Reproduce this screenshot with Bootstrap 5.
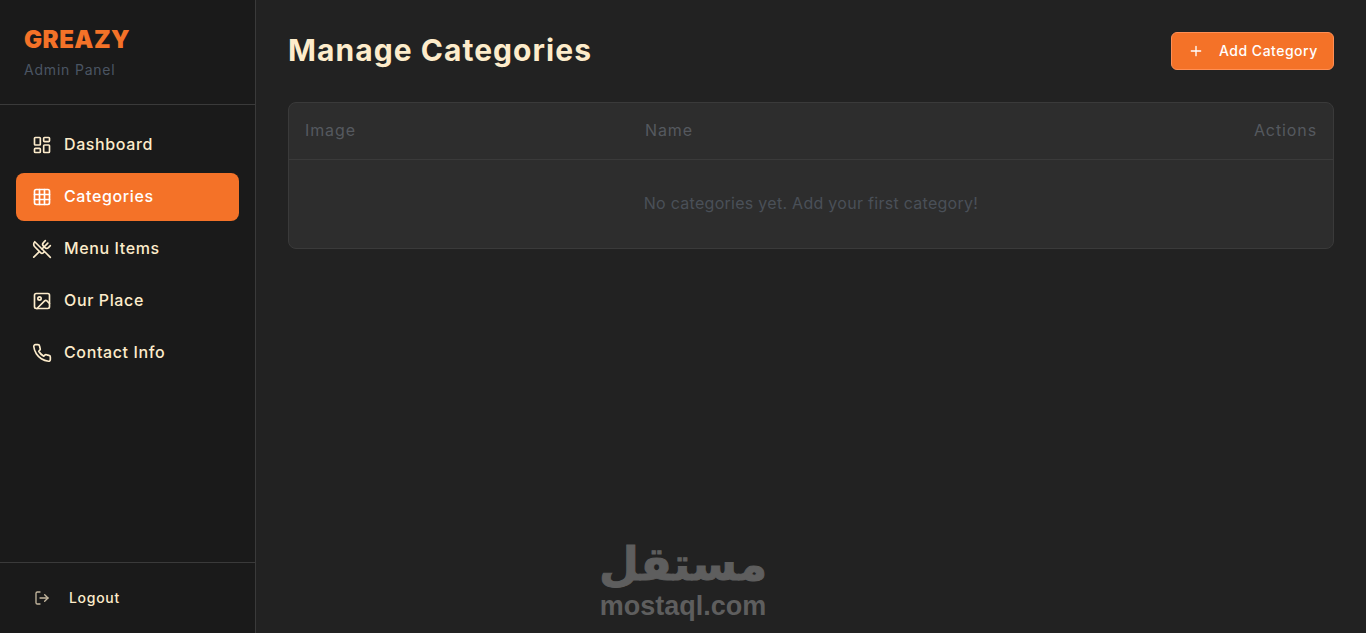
<!DOCTYPE html>
<html lang="en">

<head>
    <meta charset="UTF-8" />
    <meta name="viewport" content="width=device-width, initial-scale=1.0" />
    <title>Manage Categories</title>
    <link href="https://cdn.jsdelivr.net/npm/bootstrap@5.3.0/dist/css/bootstrap.min.css" rel="stylesheet" />
    <style>
        html, body { height: 100%; }
        body { background: #222222; font-family: "Inter", "Liberation Sans", sans-serif; color: #fdeccb; overflow: hidden; }
        .app-shell { height: 633px; }
        .side-panel { width: 256px; background: #1a1a1a; border-right: 1px solid #3a3a3a; }
        .brand-box { height: 105px; padding: 24px 24px 0; border-bottom: 1px solid #3a3a3a; }
        .brand-name { font-size: 24px; line-height: 32px; font-weight: 900; color: #f47228; letter-spacing: .5px; }
        .brand-sub { font-size: 14px; line-height: 20px; margin-top: 4px; color: #4b5563; letter-spacing: .8px; }
        .side-menu { padding: 16px; gap: 4px; }
        .side-link { height: 48px; padding: 0 16px; gap: 12px; border-radius: 8px; color: #fdeccb; font-size: 16px; font-weight: 500; letter-spacing: .62px; }
        .side-link:hover, .side-link:focus { color: #fdeccb; }
        .side-link svg { width: 20px; height: 20px; flex: none; }
        .side-link.current, .side-link.current:hover { background: #f47228; color: #fff; }
        .nudge-up { margin-top: -2px; }
        .logout-box { height: 71px; border-top: 1px solid #3a3a3a; padding: 0 24px; }
        .logout-link { color: #fdeccb; font-size: 14px; font-weight: 500; letter-spacing: .7px; gap: 19px; margin-left: 2px; }
        .logout-link svg { width: 16px; height: 16px; flex: none; opacity: .75; margin-left: 8px; }
        .page-area { padding: 32px; min-width: 0; }
        .page-head { height: 38px; margin-bottom: 32px; }
        .page-title { font-size: 30px; line-height: 36px; font-weight: 700; color: #fdeccb; margin: 0 0 2px; letter-spacing: 1.05px; }
        .add-btn { width: 163px; height: 38px; padding: 0 16px; gap: 15px; background: #f47228; border: 1px solid #ff8f55; border-radius: 6px; color: #fff; font-size: 14px; font-weight: 500; letter-spacing: .5px; white-space: nowrap; }
        .add-btn:hover { background: #f47228; color: #fff; }
        .add-btn svg { width: 16px; height: 16px; flex: none; }
        .cat-wrap { background: #2d2d2d; border: 1px solid #3a3a3a; border-radius: 8px; overflow: hidden; }
        .cat-table { --bs-table-bg: transparent; --bs-table-color: #4b5563; --bs-table-border-color: #3a3a3a; table-layout: fixed; margin: 0; }
        .cat-table th { height: 56px; padding: 0 16px 2px; vertical-align: middle; font-size: 16px; font-weight: 400; color: #55595f; letter-spacing: .9px; border-bottom: 1px solid #3a3a3a; }
        .cat-table td { height: 89px; padding: 0 16px 2px; vertical-align: middle; font-size: 16px; color: #4a5058; border: 0; letter-spacing: .28px; }
        .mark-box { position: absolute; left: 598px; top: 537px; width: 170px; color: #5e5e5e; text-align: center; pointer-events: none; }
        .mark-ar { font-family: "DejaVu Sans", sans-serif; font-size: 46px; line-height: 54px; font-weight: 700; -webkit-text-stroke: 1px #5e5e5e; }
        .mark-en { font-family: "Liberation Sans", sans-serif; font-size: 27px; line-height: 26px; font-weight: 700; margin-top: 2px; }
    </style>
</head>

<body>

    <div class="app-shell d-flex">
        <aside class="side-panel d-flex flex-column flex-shrink-0">
            <div class="brand-box">
                <div class="brand-name">GREAZY</div>
                <div class="brand-sub">Admin Panel</div>
            </div>

            <nav class="nav flex-column side-menu flex-grow-1">
                <a class="nav-link side-link d-flex align-items-center" href="#">
                    <svg viewBox="0 0 24 24" fill="none" stroke="currentColor" stroke-width="2" stroke-linecap="round" stroke-linejoin="round"><rect x="3" y="3" width="7" height="9" rx="1"/><rect x="14" y="3" width="7" height="5" rx="1"/><rect x="14" y="12" width="7" height="9" rx="1"/><rect x="3" y="16" width="7" height="5" rx="1"/></svg>
                    <span class="nudge-up">Dashboard</span>
                </a>
                <a class="nav-link side-link current d-flex align-items-center" href="#">
                    <svg viewBox="0 0 24 24" fill="none" stroke="currentColor" stroke-width="2" stroke-linecap="round" stroke-linejoin="round"><rect x="3" y="3" width="18" height="18" rx="2"/><path d="M3 9h18M3 15h18M9 3v18M15 3v18"/></svg>
                    <span class="nudge-up">Categories</span>
                </a>
                <a class="nav-link side-link d-flex align-items-center" href="#">
                    <svg viewBox="0 0 24 24" fill="none" stroke="currentColor" stroke-width="2" stroke-linecap="round" stroke-linejoin="round"><path d="m16 2-2.3 2.3a3 3 0 0 0 0 4.2l1.8 1.8a3 3 0 0 0 4.2 0L22 8"/><path d="M15 15 3.3 3.3a4.2 4.2 0 0 0 0 6l7.3 7.3c.7.7 2 .7 2.8 0L15 15Zm0 0 7 7"/><path d="m2.1 21.8 6.4-6.3"/><path d="m19 5-7 7"/></svg>
                    <span class="nudge-up">Menu Items</span>
                </a>
                <a class="nav-link side-link d-flex align-items-center" href="#">
                    <svg viewBox="0 0 24 24" fill="none" stroke="currentColor" stroke-width="2" stroke-linecap="round" stroke-linejoin="round"><rect x="3" y="3" width="18" height="18" rx="2"/><circle cx="9" cy="9" r="2"/><path d="m21 15-3.086-3.086a2 2 0 0 0-2.828 0L6 21"/></svg>
                    <span class="nudge-up">Our Place</span>
                </a>
                <a class="nav-link side-link d-flex align-items-center" href="#">
                    <svg viewBox="0 0 24 24" fill="none" stroke="currentColor" stroke-width="2" stroke-linecap="round" stroke-linejoin="round"><path d="M22 16.92v3a2 2 0 0 1-2.18 2 19.79 19.79 0 0 1-8.63-3.07 19.5 19.5 0 0 1-6-6 19.79 19.79 0 0 1-3.07-8.67A2 2 0 0 1 4.11 2h3a2 2 0 0 1 2 1.72 12.84 12.84 0 0 0 .7 2.81 2 2 0 0 1-.45 2.11L8.09 9.91a16 16 0 0 0 6 6l1.27-1.27a2 2 0 0 1 2.11-.45 12.84 12.84 0 0 0 2.81.7A2 2 0 0 1 22 16.92z"/></svg>
                    <span class="nudge-up">Contact Info</span>
                </a>
            </nav>

            <div class="logout-box d-flex align-items-center">
                <a class="nav-link logout-link d-flex align-items-center" href="#">
                    <svg viewBox="0 0 24 24" fill="none" stroke="currentColor" stroke-width="2" stroke-linecap="round" stroke-linejoin="round"><path d="M9 21H5a2 2 0 0 1-2-2V5a2 2 0 0 1 2-2h4"/><path d="m16 17 5-5-5-5"/><path d="M21 12H9"/></svg>
                    <span class="nudge-up">Logout</span>
                </a>
            </div>
        </aside>

        <main class="page-area flex-grow-1">
            <div class="page-head d-flex justify-content-between align-items-center">
                <h1 class="page-title">Manage Categories</h1>
                <button type="button" class="btn add-btn d-flex align-items-center">
                    <svg viewBox="0 0 24 24" fill="none" stroke="currentColor" stroke-width="2" stroke-linecap="round" stroke-linejoin="round"><path d="M5 12h14M12 5v14"/></svg>
                    <span class="nudge-up">Add Category</span>
                </button>
            </div>

            <div class="cat-wrap">
                <table class="table cat-table">
                    <colgroup>
                        <col style="width: 340px" />
                        <col />
                        <col style="width: 160px" />
                    </colgroup>
                    <thead>
                        <tr>
                            <th>Image</th>
                            <th>Name</th>
                            <th class="text-end">Actions</th>
                        </tr>
                    </thead>
                    <tbody>
                        <tr>
                            <td colspan="3" class="text-center">No categories yet. Add your first category!</td>
                        </tr>
                    </tbody>
                </table>
            </div>
        </main>
    </div>

    <div class="mark-box">
        <div class="mark-ar" lang="ar" dir="rtl">مستقل</div>
        <div class="mark-en">mostaql.com</div>
    </div>

    <script src="https://cdn.jsdelivr.net/npm/bootstrap@5.3.0/dist/js/bootstrap.bundle.min.js"></script>
</body>

</html>
